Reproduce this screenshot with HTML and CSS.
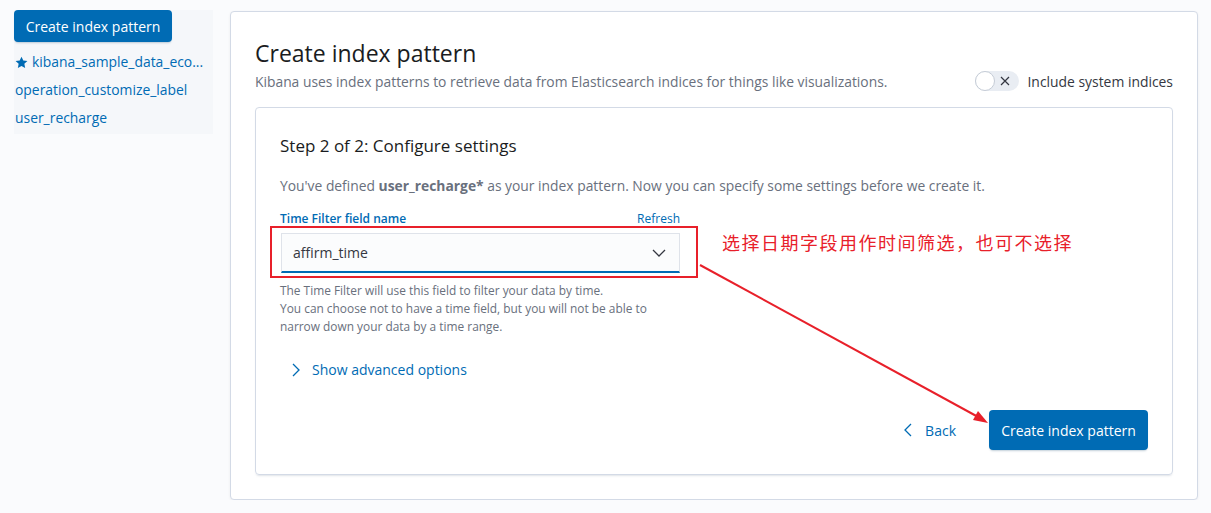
FILE: index.html
```html
<!DOCTYPE html>
<html>
<head>
<meta charset="utf-8">
<link rel="stylesheet" href="styles.css">
</head>
<body>
<div class="page">
  <aside class="sidebar">
    <button class="btn-primary side-btn">Create index pattern</button>
    <ul class="side-list">
      <li><svg class="star" width="13" height="13" viewBox="0 0 16 16"><path d="M8 .8l2.2 4.7 5.1.6-3.8 3.5 1 5.1L8 12.2l-4.5 2.5 1-5.1L.7 6.1l5.1-.6z" fill="#006bb4"/></svg>kibana_sample_data_eco...</li>
      <li>operation_customize_label</li>
      <li>user_recharge</li>
    </ul>
  </aside>
  <main class="main-panel">
    <h1 class="page-title">Create index pattern</h1>
    <div class="sub-row">
      <p class="subtitle">Kibana uses index patterns to retrieve data from Elasticsearch indices for things like visualizations.</p>
      <label class="switch-row">
        <span class="switch">
          <span class="knob"></span>
          <svg class="x-icon" width="10" height="10" viewBox="0 0 10 10"><path d="M1 1l8 8M9 1L1 9" stroke="#343741" stroke-width="1.2" fill="none"/></svg>
        </span>
        <span class="switch-label">Include system indices</span>
      </label>
    </div>
    <section class="step-panel">
      <h2 class="step-title">Step 2 of 2: Configure settings</h2>
      <p class="step-desc">You've defined <strong>user_recharge*</strong> as your index pattern. Now you can specify some settings before we create it.</p>
      <div class="form-row">
        <div class="label-row">
          <span class="field-label">Time Filter field name</span>
          <span class="refresh">Refresh</span>
        </div>
        <div class="select">
          <span>affirm_time</span>
          <svg width="14" height="8" viewBox="0 0 14 8"><path d="M1 1l6 6 6-6" stroke="#343741" stroke-width="1.3" fill="none"/></svg>
        </div>
        <p class="help">The Time Filter will use this field to filter your data by time.<br>You can choose not to have a time field, but you will not be able to<br>narrow down your data by a time range.</p>
      </div>
      <div class="advanced">
        <svg width="8" height="14" viewBox="0 0 8 14"><path d="M1 1l6 6-6 6" stroke="#006bb4" stroke-width="1.3" fill="none"/></svg>
        <span>Show advanced options</span>
      </div>
      <div class="actions">
        <span class="back">
          <svg width="8" height="14" viewBox="0 0 8 14"><path d="M7 1L1 7l6 6" stroke="#006bb4" stroke-width="1.3" fill="none"/></svg>
          <span>Back</span>
        </span>
        <button class="btn-primary create-btn">Create index pattern</button>
      </div>
    </section>
  </main>
</div>
<div class="anno-box"></div>
<div class="anno-text">选择日期字段用作时间筛选，也可不选择</div>
<svg class="anno-arrow" width="1211" height="513" viewBox="0 0 1211 513">
  <line x1="700" y1="265" x2="980" y2="418" stroke="#e8202a" stroke-width="2"/>
  <path d="M988 423 L973 420 L978 411 Z" fill="#e8202a"/>
</svg>
</body>
</html>
```
FILE: styles.css
```css
* { box-sizing: border-box; }
body {
  margin: 0;
  background: #fafbfd;
  font-family: "Open Sans", "Noto Sans", sans-serif;
  color: #343741;
  font-size: 14px;
}
.page {
  display: flex;
  align-items: flex-start;
  padding-top: 10px;
  padding-left: 14px;
}
.sidebar {
  width: 199px;
  background: #f5f7fa;
  padding-bottom: 2px;
}
.btn-primary {
  background: #006bb4;
  color: #fff;
  border: none;
  border-radius: 4px;
  font-family: "Open Sans", sans-serif;
  font-size: 14px;
  box-shadow: 0 2px 2px -1px rgba(54,97,126,0.3);
  cursor: pointer;
}
.side-btn {
  width: 158px;
  height: 32px;
  padding: 0;
}
.side-list {
  list-style: none;
  margin: 6px 0 0;
  padding: 0 0 0 1px;
  font-size: 13.9px;
}
.side-list li {
  color: #006bb4;
  height: 28px;
  line-height: 28px;
  white-space: nowrap;
  display: flex;
  align-items: center;
}
.star { margin-right: 4px; }
.main-panel {
  margin-left: 17px;
  margin-top: 1px;
  width: 968px;
  height: 489px;
  background: #fff;
  border: 1px solid #d3dae6;
  border-radius: 4px;
  box-shadow: 0 1px 3px rgba(0,0,0,0.06);
  padding: 24px 24px;
}
.page-title {
  margin: 0;
  font-size: 23px;
  font-weight: 500;
  line-height: 34px;
  color: #1a1c21;
}
.sub-row {
  display: flex;
  justify-content: space-between;
  align-items: center;
  height: 22px;
}
.subtitle {
  margin: 0;
  color: #69707d;
  font-size: 13.85px;
}
.switch-row {
  display: flex;
  align-items: center;
}
.switch {
  position: relative;
  width: 44px;
  height: 20px;
  border-radius: 10px;
  background: #e9edf3;
  display: flex;
  align-items: center;
  justify-content: flex-end;
  padding-right: 9px;
}
.knob {
  position: absolute;
  left: 0;
  top: 0;
  width: 20px;
  height: 20px;
  border-radius: 50%;
  background: #fff;
  border: 1px solid #c5ccd6;
}
.switch-label {
  margin-left: 8px;
  color: #343741;
  font-size: 13.9px;
}
.step-panel {
  margin-top: 15px;
  border: 1px solid #d3dae6;
  border-radius: 4px;
  box-shadow: 0 2px 2px -1px rgba(152,162,179,0.3);
  padding: 24px 24px 24px;
  height: 368px;
}
.step-title {
  margin: 0;
  font-size: 17px;
  font-weight: 500;
  line-height: 28px;
  color: #1a1c21;
}
.step-desc {
  margin: 15px 0 0;
  color: #69707d;
  line-height: 22px;
  font-size: 13.85px;
}
.step-desc strong { color: #69707d; font-weight: 700; }
.form-row {
  width: 400px;
  margin-top: 13px;
}
.label-row {
  display: flex;
  justify-content: space-between;
  font-size: 12px;
  line-height: 18px;
}
.field-label {
  color: #006bb4;
  font-weight: 600;
}
.refresh { color: #006bb4; }
.select {
  margin-top: 5px;
  margin-left: 1px;
  width: 399px;
  height: 40px;
  background: #fbfcfd;
  border: 1px solid #dfe3ea;
  border-bottom: 2px solid #006bb4;
  display: flex;
  align-items: center;
  justify-content: space-between;
  padding: 0 13px 0 11px;
  color: #343741;
}
.help {
  margin: 8px 0 0;
  font-size: 11.9px;
  line-height: 18px;
  color: #69707d;
  white-space: nowrap;
}
.advanced {
  margin-top: 25px;
  margin-left: 12px;
  display: flex;
  align-items: center;
  color: #006bb4;
  line-height: 20px;
}
.advanced span { margin-left: 12px; }
.actions {
  margin-top: 30px;
  display: flex;
  justify-content: flex-end;
  align-items: center;
}
.back {
  display: flex;
  align-items: center;
  color: #006bb4;
  margin-right: 33px;
}
.back span { margin-left: 13px; }
.create-btn {
  width: 159px;
  height: 40px;
}
.anno-box {
  position: absolute;
  left: 270px;
  top: 226px;
  width: 428px;
  height: 52px;
  border: 2px solid #e8202a;
}
.anno-text {
  position: absolute;
  left: 722px;
  top: 230px;
  color: #e8202a;
  font-family: "Noto Sans CJK SC", sans-serif;
  font-size: 18px;
  letter-spacing: 1.5px;
  line-height: 24px;
}
.anno-arrow {
  position: absolute;
  left: 0;
  top: 0;
  pointer-events: none;
}
```
